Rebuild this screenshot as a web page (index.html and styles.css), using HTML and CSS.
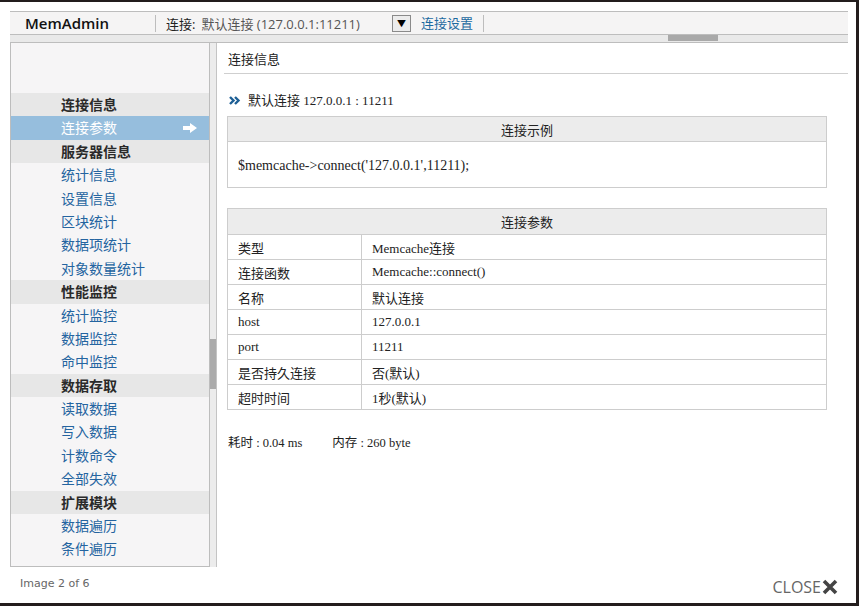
FILE: index.html
```html
<!DOCTYPE html>
<html lang="zh-CN">
<head>
<meta charset="utf-8">
<title>MemAdmin</title>
<link rel="stylesheet" href="styles.css">
</head>
<body>
<div class="frame">
  <div class="app">
    <div class="topbar">
      <div class="brand">MemAdmin</div>
      <div class="conn">
        <span class="conn-label">连接:</span>
        <span class="conn-value">默认连接 (127.0.0.1:11211)</span>
        <span class="select-btn">▼</span>
      </div>
      <div class="conn-set"><a href="#">连接设置</a></div>
    </div>
    <div class="hscroll"><div class="hthumb"></div></div>
    <div class="main">
      <div class="sidebar">
        <div class="side-top"></div>
        <div class="grp">连接信息</div>
        <div class="item active">连接参数
          <svg class="arrow" width="14" height="10" viewBox="0 0 14 10"><path d="M0 3h7V0l7 5-7 5V7H0z" fill="#fff"/></svg>
        </div>
        <div class="grp">服务器信息</div>
        <div class="item">统计信息</div>
        <div class="item">设置信息</div>
        <div class="item">区块统计</div>
        <div class="item">数据项统计</div>
        <div class="item">对象数量统计</div>
        <div class="grp">性能监控</div>
        <div class="item">统计监控</div>
        <div class="item">数据监控</div>
        <div class="item">命中监控</div>
        <div class="grp">数据存取</div>
        <div class="item">读取数据</div>
        <div class="item">写入数据</div>
        <div class="item">计数命令</div>
        <div class="item">全部失效</div>
        <div class="grp">扩展模块</div>
        <div class="item">数据遍历</div>
        <div class="item">条件遍历</div>
      </div>
      <div class="vscroll"><div class="vthumb"></div></div>
      <div class="content">
        <div class="page-title">连接信息</div>
        <div class="subhead"><svg class="raquo" width="12" height="9" viewBox="0 0 12 9"><path d="M1 1l3.5 3.5L1 8M6 1l3.5 3.5L6 8" fill="none" stroke="#1d5f95" stroke-width="2.4"/></svg>默认连接 127.0.0.1 : 11211</div>
        <table class="tbl ex">
          <tr><th>连接示例</th></tr>
          <tr><td class="code">$memcache-&gt;connect('127.0.0.1',11211);</td></tr>
        </table>
        <table class="tbl params">
          <tr><th colspan="2">连接参数</th></tr>
          <tr><td class="k">类型</td><td>Memcache连接</td></tr>
          <tr><td class="k">连接函数</td><td>Memcache::connect()</td></tr>
          <tr><td class="k">名称</td><td>默认连接</td></tr>
          <tr><td class="k">host</td><td>127.0.0.1</td></tr>
          <tr><td class="k">port</td><td>11211</td></tr>
          <tr><td class="k">是否持久连接</td><td>否(默认)</td></tr>
          <tr><td class="k">超时时间</td><td>1秒(默认)</td></tr>
        </table>
        <div class="stats"><span>耗时 : 0.04 ms</span><span>内存 : 260 byte</span></div>
      </div>
    </div>
  </div>
  <div class="lb-foot">
    <span class="counter">Image 2 of 6</span>
    <span class="close">CLOSE<svg width="16" height="16" viewBox="0 0 16 16"><path d="M2 2L14 14M14 2L2 14" stroke="#444" stroke-width="3.6"/></svg></span>
  </div>
</div>
</body>
</html>
```

FILE: styles.css
```css
* { box-sizing: border-box; }
html, body { margin: 0; padding: 0; }
body {
  background: #231d1d;
  width: 859px;
  height: 606px;
  overflow: hidden;
  font-family: "Liberation Serif", "Noto Sans CJK SC", serif;
}
.frame {
  background: #fff;
  width: 856px;
  height: 601px;
  margin-top: 2px;
  display: flex;
  flex-direction: column;
}
.app {
  padding: 9px 8px 0 10px;
}
.topbar {
  display: flex;
  align-items: center;
  height: 24px;
  background: #f5f4f4;
  border-top: 1px solid #bdbdbd;
  border-bottom: 1px solid #bdbdbd;
  font-family: "Open Sans", "Noto Sans CJK SC", sans-serif;
  font-size: 13px;
}
.brand {
  width: 146px;
  padding-left: 15px;
  font-weight: 600;
  font-size: 15px;
  color: #111;
  border-right: 1px solid #bdbdbd;
  height: 17px;
  line-height: 17px;
}
.conn {
  display: flex;
  align-items: center;
  padding-left: 10px;
  width: 255px;
  height: 17px;
}
.conn-label { color: #222; margin-right: 6px; }
.conn-value { color: #555; }
.select-btn {
  margin-left: auto;
  width: 19px;
  height: 17px;
  border: 1px solid #8a8a8a;
  background: #ececec;
  font-size: 9px;
  line-height: 15px;
  text-align: center;
  color: #000;
}
.conn-set {
  padding: 0 10px;
  border-right: 1px solid #bdbdbd;
  height: 17px;
  line-height: 17px;
}
.conn-set a { color: #1d6aa0; text-decoration: none; }
.hscroll {
  height: 8px;
  background: #e9e9e9;
  border-bottom: 1px solid #bdbdbd;
  position: relative;
}
.hthumb {
  position: absolute;
  left: 658px;
  top: 0;
  width: 50px;
  height: 6px;
  background: #a9a9a9;
}
.main {
  display: flex;
  height: 524px;
}
.sidebar {
  width: 200px;
  background: #f6f5f6;
  border-left: 1px solid #bdbdbd;
  border-right: 1px solid #bdbdbd;
  border-bottom: 1px solid #bdbdbd;
  font-family: "Noto Sans CJK SC", sans-serif;
  font-size: 14px;
}
.side-top { height: 50px; }
.grp, .item {
  height: 23.4px;
  line-height: 23.4px;
  padding-left: 50px;
}
.grp {
  background: #e7e7e7;
  font-weight: bold;
  color: #2a2a2a;
}
.item { color: #2464a0; position: relative; }
.item.active { background: #96bedd; color: #fff; }
.arrow { position: absolute; right: 12px; top: 7px; }
.vscroll {
  width: 7px;
  background: #ececec;
  border-right: 1px solid #c4c4c4;
  position: relative;
}
.vthumb {
  position: absolute;
  top: 296px;
  left: 0;
  width: 6px;
  height: 50px;
  background: #ababab;
}
.content {
  flex: 1;
  background: #fff;
  padding-left: 7px;
  font-size: 13px;
  color: #222;
}
.page-title {
  font-family: "Noto Sans CJK SC", sans-serif;
  font-size: 13px;
  height: 31px;
  line-height: 32px;
  padding-left: 4px;
  border-bottom: 1px solid #cfcfcf;
}
.subhead {
  margin-top: 18px;
  padding-left: 5px;
  height: 17px;
  line-height: 17px;
  font-size: 13px;
  display: flex;
  align-items: center;
}
.raquo { margin-right: 7px; }
.tbl {
  width: 600px;
  margin-left: 3px;
  border-collapse: collapse;
  font-size: 13px;
}
.tbl th, .tbl td {
  border: 1px solid #cdcdcd;
  font-weight: normal;
  text-align: left;
  padding: 0 0 0 10px;
}
.tbl th {
  background: #ececec;
  text-align: center;
  height: 25px;
  padding: 0;
}
.ex { margin-top: 7px; }
.ex td.code { height: 46px; font-size: 14px; padding-top: 2px; }
.params { margin-top: 20px; }
.params th { height: 26px; }
.params td { height: 25px; }
.params td.k { width: 134px; }
.stats {
  margin-top: 22px;
  padding-left: 4px;
  font-size: 12.5px;
  display: flex;
  gap: 30px;
}
.lb-foot {
  display: flex;
  justify-content: space-between;
  align-items: center;
  padding: 4px 18px 0 20px;
}
.counter {
  font-family: "DejaVu Sans", sans-serif;
  font-size: 11px;
  color: #666;
  margin-top: -3px;
}
.close {
  font-family: "Open Sans", sans-serif;
  font-size: 16px;
  color: #666;
  display: flex;
  align-items: center;
  gap: 1px;
  margin-top: 5px;
}
```
